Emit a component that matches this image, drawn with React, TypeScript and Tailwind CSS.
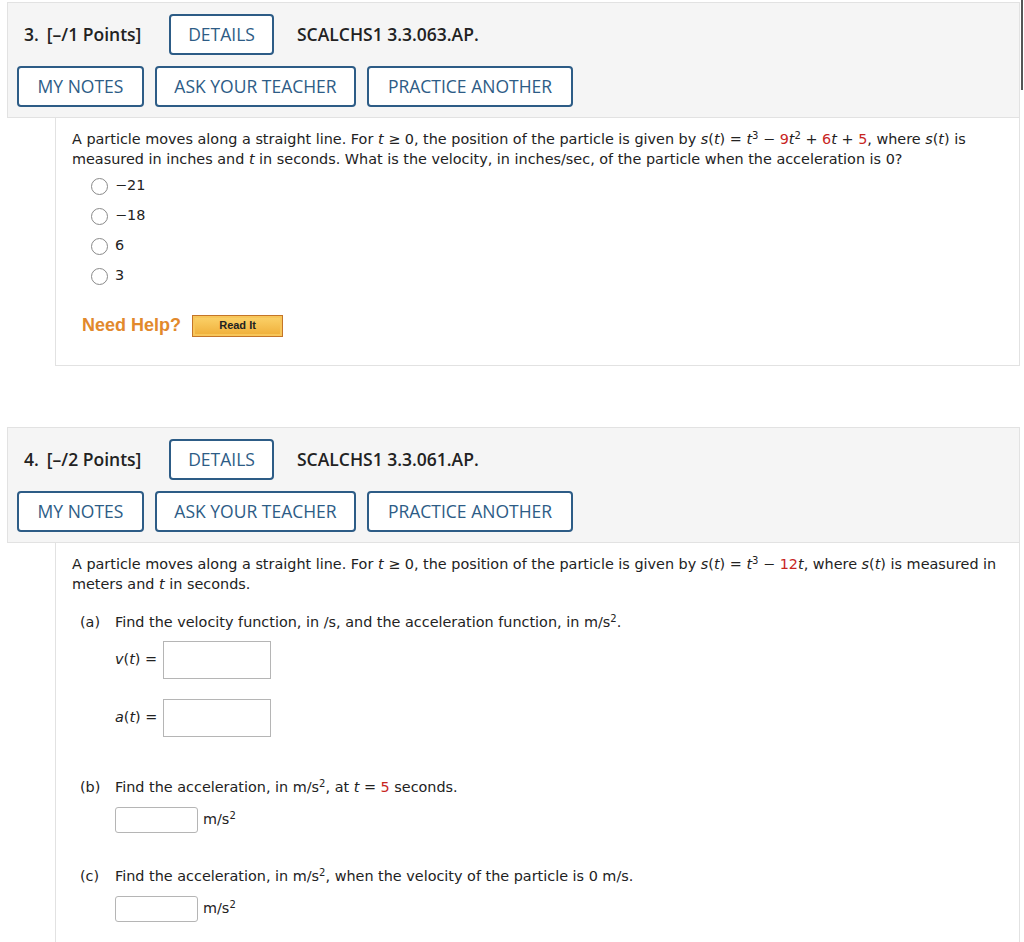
import type { ReactNode } from "react";

const body = "font-['DejaVu_Sans',Verdana,sans-serif] text-[14.4px] text-[#222]";

function HeadButton({ children, w }: { children: ReactNode; w: string }) {
  return (
    <button
      type="button"
      className={`${w} h-[41px] rounded-[4px] border-2 border-[#2d5c86] bg-white text-[17.5px] font-medium text-[#2d5c86] font-['Open_Sans',sans-serif]`}
    >
      {children}
    </button>
  );
}

function QuestionHeader({ num, points, code }: { num: string; points: string; code: string }) {
  return (
    <div className="ml-[7px] w-[1013px] border border-[#e2e2e2] bg-[#f5f5f5] px-[9px] pt-[11px] pb-[10px] font-['Open_Sans',sans-serif]">
      <div className="flex items-center">
        <div className="ml-[7px] w-[145px] text-[17.5px] font-semibold text-[#222]">
          {num}.<span className="ml-[8px]">[–/{points} Points]</span>
        </div>
        <HeadButton w="w-[105px]">DETAILS</HeadButton>
        <div className="ml-[23px] text-[17.5px] font-semibold text-[#222]">{code}</div>
      </div>
      <div className="mt-[11px] flex gap-[11px]">
        <HeadButton w="w-[127px]">MY NOTES</HeadButton>
        <HeadButton w="w-[201px]">ASK YOUR TEACHER</HeadButton>
        <HeadButton w="w-[206px]">PRACTICE ANOTHER</HeadButton>
      </div>
    </div>
  );
}

function V({ children }: { children: ReactNode }) {
  return <i>{children}</i>;
}

function R({ children }: { children: ReactNode }) {
  return <span className="text-[#c8261f]">{children}</span>;
}

function Radio({ label }: { label: string }) {
  return (
    <div className="flex h-[30px] items-center">
      <span className="ml-[19px] inline-block h-[17px] w-[17px] rounded-full border-[1.5px] border-[#8a8a8a] bg-white" />
      <span className="ml-[7px]">{label}</span>
    </div>
  );
}

function Sup({ children }: { children: ReactNode }) {
  return <sup className="text-[10px] leading-none">{children}</sup>;
}

export default function App() {
  return (
    <div className="relative min-h-[942px] w-[1024px] overflow-hidden bg-white pt-[2px]">
      <div className="absolute right-[1px] top-0 h-[90px] w-[2px] bg-[#555]" />

      <QuestionHeader num="3" points="1" code="SCALCHS1 3.3.063.AP." />
      <div className={`ml-[55px] h-[248px] w-[965px] border border-t-0 border-[#e2e2e2] px-[16px] pt-[11px] ${body}`}>
        <p className="leading-[20px]">
          A particle moves along a straight line. For <V>t</V> ≥ 0, the position of the particle is given by{" "}
          <V>s</V>(<V>t</V>) = <V>t</V>
          <Sup>3</Sup> − <R>9</R>
          <V>t</V>
          <Sup>2</Sup> + <R>6</R>
          <V>t</V> + <R>5</R>, where <V>s</V>(<V>t</V>) is measured in inches and <V>t</V> in seconds. What is the
          velocity, in inches/sec, of the particle when the acceleration is 0?
        </p>
        <div className="mt-[2px]">
          <Radio label="−21" />
          <Radio label="−18" />
          <Radio label="6" />
          <Radio label="3" />
        </div>
        <div className="mt-[21px] flex items-center">
          <span className="ml-[10px] font-['Liberation_Sans',Arial,sans-serif] text-[18px] font-bold text-[#e2892c]">
            Need Help?
          </span>
          <button
            type="button"
            className="ml-[11px] h-[22px] w-[91px] border border-[#c47528] bg-gradient-to-b from-[#fbd36a] to-[#efae36] font-['Liberation_Sans',Arial,sans-serif] text-[11px] font-bold text-[#222] shadow-[inset_0_0_0_2px_#f7c65a]"
          >
            Read It
          </button>
        </div>
      </div>

      <div className="h-[61px]" />

      <QuestionHeader num="4" points="2" code="SCALCHS1 3.3.061.AP." />
      <div className={`ml-[55px] h-[400px] w-[965px] border border-t-0 border-[#e2e2e2] px-[16px] pt-[11px] ${body}`}>
        <p className="leading-[20px]">
          A particle moves along a straight line. For <V>t</V> ≥ 0, the position of the particle is given by{" "}
          <V>s</V>(<V>t</V>) = <V>t</V>
          <Sup>3</Sup> − <R>12</R>
          <V>t</V>, where <V>s</V>(<V>t</V>) is measured in meters and <V>t</V> in seconds.
        </p>

        <div className="mt-[18px] flex">
          <span className="ml-[8px] w-[35px]">(a)</span>
          <div>
            <div className="leading-[20px]">
              Find the velocity function, in /s, and the acceleration function, in m/s<Sup>2</Sup>.
            </div>
            <div className="mt-[9px] flex items-center">
              <span className="w-[48px]">
                <V>v</V>(<V>t</V>) =
              </span>
              <span className="h-[38px] w-[108px] border border-[#b5b5b5] bg-white" />
            </div>
            <div className="mt-[20px] flex items-center">
              <span className="w-[48px]">
                <V>a</V>(<V>t</V>) =
              </span>
              <span className="h-[38px] w-[108px] border border-[#b5b5b5] bg-white" />
            </div>
          </div>
        </div>

        <div className="mt-[40px] flex">
          <span className="ml-[8px] w-[35px]">(b)</span>
          <div>
            <div className="leading-[20px]">
              Find the acceleration, in m/s<Sup>2</Sup>, at <V>t</V> = <R>5</R> seconds.
            </div>
            <div className="mt-[10px] flex items-center">
              <span className="h-[26px] w-[83px] rounded-[3px] border border-[#b5b5b5] bg-white" />
              <span className="ml-[5px]">
                m/s<Sup>2</Sup>
              </span>
            </div>
          </div>
        </div>

        <div className="mt-[33px] flex">
          <span className="ml-[8px] w-[35px]">(c)</span>
          <div>
            <div className="leading-[20px]">
              Find the acceleration, in m/s<Sup>2</Sup>, when the velocity of the particle is 0 m/s.
            </div>
            <div className="mt-[10px] flex items-center">
              <span className="h-[26px] w-[83px] rounded-[3px] border border-[#b5b5b5] bg-white" />
              <span className="ml-[5px]">
                m/s<Sup>2</Sup>
              </span>
            </div>
          </div>
        </div>
      </div>
    </div>
  );
}
